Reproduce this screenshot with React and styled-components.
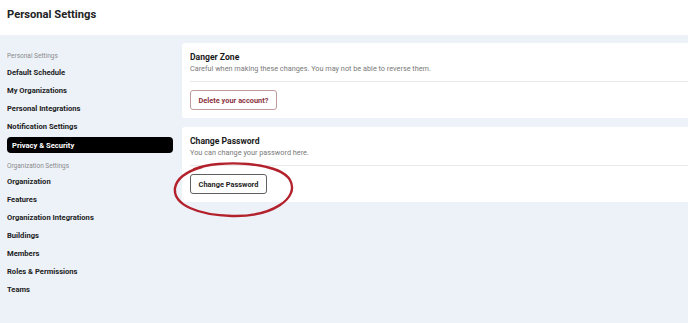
import React from 'react';
import styled, { createGlobalStyle } from 'styled-components';

const GlobalStyle = createGlobalStyle`
  html, body {
    margin: 0;
    padding: 0;
    background: #edf2f9;
    font-family: Roboto, "Liberation Sans", sans-serif;
    color: #1c1c1c;
  }
  * {
    box-sizing: border-box;
  }
`;

const Page = styled.div`
  width: 688px;
  height: 323px;
  display: flex;
  flex-direction: column;
  overflow: hidden;
`;

const Header = styled.header`
  height: 35px;
  background: #fff;
  display: flex;
  align-items: center;
  padding: 0 7px 7px;
`;

const PageTitle = styled.h1`
  margin: 0;
  font-size: 11.2px;
  font-weight: 700;
  color: #222;
`;

const Body = styled.div`
  flex: 1;
  display: grid;
  grid-template-columns: 182px 1fr;
`;

const Sidebar = styled.nav`
  display: flex;
  flex-direction: column;
  padding: 10px 9px 0 7px;
`;

const SectionLabel = styled.div`
  font-size: 6.5px;
  line-height: 10px;
  color: #8a8a8a;
  margin: ${(p) => (p.$first ? '6px 0 2px' : '6px 0 1px')};
`;

const NavItem = styled.a`
  display: flex;
  align-items: center;
  height: ${(p) => (p.$active ? '16px' : '18px')};
  margin: ${(p) => (p.$active ? '2px 0' : '0')};
  padding: 0 ${(p) => (p.$active ? '5px' : '0')};
  border-radius: 4px;
  background: ${(p) => (p.$active ? '#000' : 'transparent')};
  color: ${(p) => (p.$active ? '#fff' : '#1c1c1c')};
  font-size: 7.6px;
  font-weight: 700;
  text-decoration: none;
  cursor: pointer;
`;

const Content = styled.main`
  position: relative;
  display: flex;
  flex-direction: column;
  gap: 9px;
  padding-top: 8px;
`;

const Card = styled.section`
  background: #fff;
  border-radius: 3px 0 0 3px;
  height: 75px;
  display: flex;
  flex-direction: column;
`;

const CardHead = styled.div`
  padding: 9px 8px 7px;
`;

const CardTitle = styled.h2`
  margin: 0;
  font-size: 8.6px;
  line-height: 11px;
  font-weight: 700;
  color: #1a1a1a;
`;

const CardText = styled.p`
  margin: 0;
  font-size: 7.3px;
  line-height: 11px;
  color: #7a7a7a;
`;

const Divider = styled.hr`
  margin: 0 0 0 8px;
  border: none;
  border-top: 1px solid #e9e9e9;
`;

const CardBody = styled.div`
  padding: 8px;
  display: flex;
`;

const Button = styled.button`
  height: 20px;
  width: ${(p) => p.$width}px;
  padding: 0;
  border-radius: 3px;
  background: #fff;
  border: 1px solid ${(p) => (p.$danger ? '#bf9a9a' : '#606060')};
  color: ${(p) => (p.$danger ? '#8a3342' : '#1e1e1e')};
  font-family: inherit;
  font-size: 7.4px;
  font-weight: 700;
  cursor: pointer;
`;

const Circle = styled.svg`
  position: absolute;
  left: -10px;
  top: 125px;
  pointer-events: none;
`;

const personal = [
  'Default Schedule',
  'My Organizations',
  'Personal Integrations',
  'Notification Settings',
  'Privacy & Security',
];

const organization = [
  'Organization',
  'Features',
  'Organization Integrations',
  'Buildings',
  'Members',
  'Roles & Permissions',
  'Teams',
];

const App = () => {
  return (
    <Page>
      <GlobalStyle />
      <Header>
        <PageTitle>Personal Settings</PageTitle>
      </Header>
      <Body>
        <Sidebar>
          <SectionLabel $first>Personal Settings</SectionLabel>
          {personal.map((item) => (
            <NavItem key={item} $active={item === 'Privacy & Security'}>
              {item}
            </NavItem>
          ))}
          <SectionLabel>Organization Settings</SectionLabel>
          {organization.map((item) => (
            <NavItem key={item}>{item}</NavItem>
          ))}
        </Sidebar>
        <Content>
          <Card>
            <CardHead>
              <CardTitle>Danger Zone</CardTitle>
              <CardText>
                Careful when making these changes. You may not be able to reverse them.
              </CardText>
            </CardHead>
            <Divider />
            <CardBody>
              <Button $danger $width={87}>Delete your account?</Button>
            </CardBody>
          </Card>
          <Card>
            <CardHead>
              <CardTitle>Change Password</CardTitle>
              <CardText>You can change your password here.</CardText>
            </CardHead>
            <Divider />
            <CardBody>
              <Button $width={77}>Change Password</Button>
            </CardBody>
          </Card>
          <Circle width="140" height="64" viewBox="0 0 140 64">
            <path
              d="M22 9 C 48 -1, 108 2, 118 20 C 128 38, 100 57, 60 56 C 26 55, 1 45, 3 28 C 5 17, 16 11, 30 7"
              fill="none"
              stroke="#b3222c"
              strokeWidth="2.4"
              strokeLinecap="round"
            />
          </Circle>
        </Content>
      </Body>
    </Page>
  );
};

export default App;
